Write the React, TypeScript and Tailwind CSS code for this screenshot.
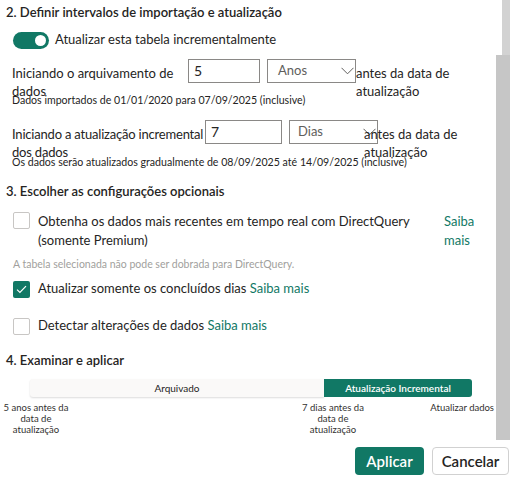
import type { ReactNode } from 'react'

const green = 'bg-[#117865]'

function Chevron() {
  return (
    <svg width="13" height="8" viewBox="0 0 13 8" className="shrink-0">
      <polyline points="0.5,0.8 6.5,6.8 12.5,0.8" fill="none" stroke="#605e5c" strokeWidth="1" />
    </svg>
  )
}

function Checkbox({ checked = false }: { checked?: boolean }) {
  if (checked) {
    return (
      <div className={`flex h-[17px] w-[17px] shrink-0 items-center justify-center rounded-[2px] ${green}`}>
        <svg width="11" height="9" viewBox="0 0 11 9">
          <polyline points="1,4.6 3.9,7.4 10,1.2" fill="none" stroke="#fff" strokeWidth="1.2" />
        </svg>
      </div>
    )
  }
  return <div className="h-[17px] w-[17px] shrink-0 rounded-[2px] border border-[#c8c6c4] bg-white" />
}

function Link({ children }: { children: ReactNode }) {
  return <span className="text-[#117865]">{children}</span>
}

function RangeRow({
  label,
  labelClass,
  value,
  inputWidth,
  unit,
  unitPad,
  tailOffset,
}: {
  label: [string, string]
  labelClass: string
  value: string
  inputWidth: string
  unit: string
  unitPad: string
  tailOffset: string
}) {
  return (
    <div className="flex items-start whitespace-nowrap pl-1.5">
      <div className={`${labelClass} shrink-0 pt-[5px] leading-[18px]`}>
        <div>{label[0]}</div>
        <div>{label[1]}</div>
      </div>
      <div className={`${inputWidth} flex h-6 shrink-0 items-center border border-[#8a8886] pl-[5px] text-[14px] leading-none`}>
        {value}
      </div>
      <div className={`ml-[7px] flex h-6 w-[89px] shrink-0 items-center justify-between border border-[#8a8886] ${unitPad} pr-[1px] text-[#605e5c]`}>
        <span>{unit}</span>
        <Chevron />
      </div>
      <div className={`${tailOffset} pt-[5px] leading-[18px]`}>
        <div>antes da data de</div>
        <div>atualização</div>
      </div>
    </div>
  )
}

export default function App() {
  return (
    <div className="relative h-[482px] w-[515px] overflow-hidden bg-white font-['Lato','Open_Sans',sans-serif] text-[13px] text-[#252423]">
      {/* scrollbar */}
      <div className="absolute right-[5px] top-0 h-[55px] w-[8px] bg-[#d2d2d2]" />
      <div className="absolute right-[5px] top-[55px] h-[385px] w-[14px] bg-[#c6c6c6]" />

      <div className="pl-1.5">
        <h2 className="h-6 whitespace-nowrap text-[13px] font-semibold leading-6">
          2. Definir intervalos de importação e atualização
        </h2>

        <div className="mt-[7px] flex h-[18px] items-center pl-[7px]">
          <div className={`flex h-[17px] w-[36px] items-center justify-end rounded-full pr-[3px] ${green}`}>
            <div className="h-[11px] w-[11px] rounded-full bg-white" />
          </div>
          <span className="ml-[6px]">Atualizar esta tabela incrementalmente</span>
        </div>

        <div className="mt-[10px]">
          <RangeRow
            label={['Iniciando o arquivamento de', 'dados']}
            labelClass="w-[176px]"
            value="5"
            inputWidth="w-[72px]"
            unit="Anos"
            unitPad="pl-[10px]"
            tailOffset="ml-0"
          />
        </div>
        <div className="-mt-[6px] whitespace-nowrap pl-1.5 text-[10.6px] leading-3">
          Dados importados de 01/01/2020 para 07/09/2025 (inclusive)
        </div>

        <div className="mt-[14px]">
          <RangeRow
            label={['Iniciando a atualização incremental', 'dos dados']}
            labelClass="w-[193px] tracking-[-0.2px]"
            value="7"
            inputWidth="w-[77px]"
            unit="Dias"
            unitPad="pl-[8px]"
            tailOffset="-ml-[14px]"
          />
        </div>
        <div className="-mt-[5px] whitespace-nowrap pl-1.5 text-[10.6px] leading-3">
          Os dados serão atualizados gradualmente de 08/09/2025 até 14/09/2025 (inclusive)
        </div>

        <h2 className="mt-[11px] h-6 text-[13px] font-semibold leading-6">3. Escolher as configurações opcionais</h2>

        <div className="mt-[9px] flex items-start pl-[7px]">
          <Checkbox />
          <div className="ml-2 w-[400px] whitespace-nowrap leading-[19px]">
            <div>Obtenha os dados mais recentes em tempo real com DirectQuery</div>
            <div>(somente Premium)</div>
          </div>
          <div className="ml-[6px] leading-[19px]">
            <div><Link>Saiba</Link></div>
            <div><Link>mais</Link></div>
          </div>
        </div>

        <div className="mt-[7px] pl-[7px] text-[10.5px] leading-[14px] text-[#a19f9d]">
          A tabela selecionada não pode ser dobrada para DirectQuery.
        </div>

        <div className="mt-[9px] flex h-[18px] items-center pl-[7px]">
          <Checkbox checked />
          <span className="ml-2">
            Atualizar somente os concluídos dias <Link>Saiba mais</Link>
          </span>
        </div>

        <div className="mt-[19px] flex h-[18px] items-center pl-[7px]">
          <Checkbox />
          <span className="ml-2">
            Detectar alterações de dados <Link>Saiba mais</Link>
          </span>
        </div>

        <h2 className="mt-[13px] h-6 text-[13px] font-semibold leading-6">4. Examinar e aplicar</h2>
      </div>

      <div className="ml-[30px] mt-[7px] flex h-[18px] w-[442px] text-[10px]">
        <div className="flex flex-1 items-center justify-center rounded-l-[3px] bg-[#faf9f8] shadow-[0_1px_2px_rgba(0,0,0,0.14)]">
          Arquivado
        </div>
        <div className={`flex w-[148px] items-center justify-center rounded-r-[3px] font-semibold text-white ${green}`}>
          Atualização Incremental
        </div>
      </div>

      <div className="mt-[5px] flex whitespace-nowrap text-[9.5px] leading-[11px] text-[#323130]">
        <div className="w-[72px] text-center">
          <div>5 anos antes da</div>
          <div>data de</div>
          <div>atualização</div>
        </div>
        <div className="ml-[225px] w-[72px] text-center">
          <div>7 dias antes da</div>
          <div>data de</div>
          <div>atualização</div>
        </div>
        <div className="ml-auto mr-[21px]">Atualizar dados</div>
      </div>

      <div className="mt-[12px] flex justify-end gap-2 pr-[6px] text-[15px] font-semibold">
        <button className={`h-7 w-[69px] rounded-[4px] text-white ${green}`}>Aplicar</button>
        <button className="h-7 w-[77px] rounded-[4px] border border-[#d1d1d1] bg-white text-[#252423]">Cancelar</button>
      </div>
    </div>
  )
}
